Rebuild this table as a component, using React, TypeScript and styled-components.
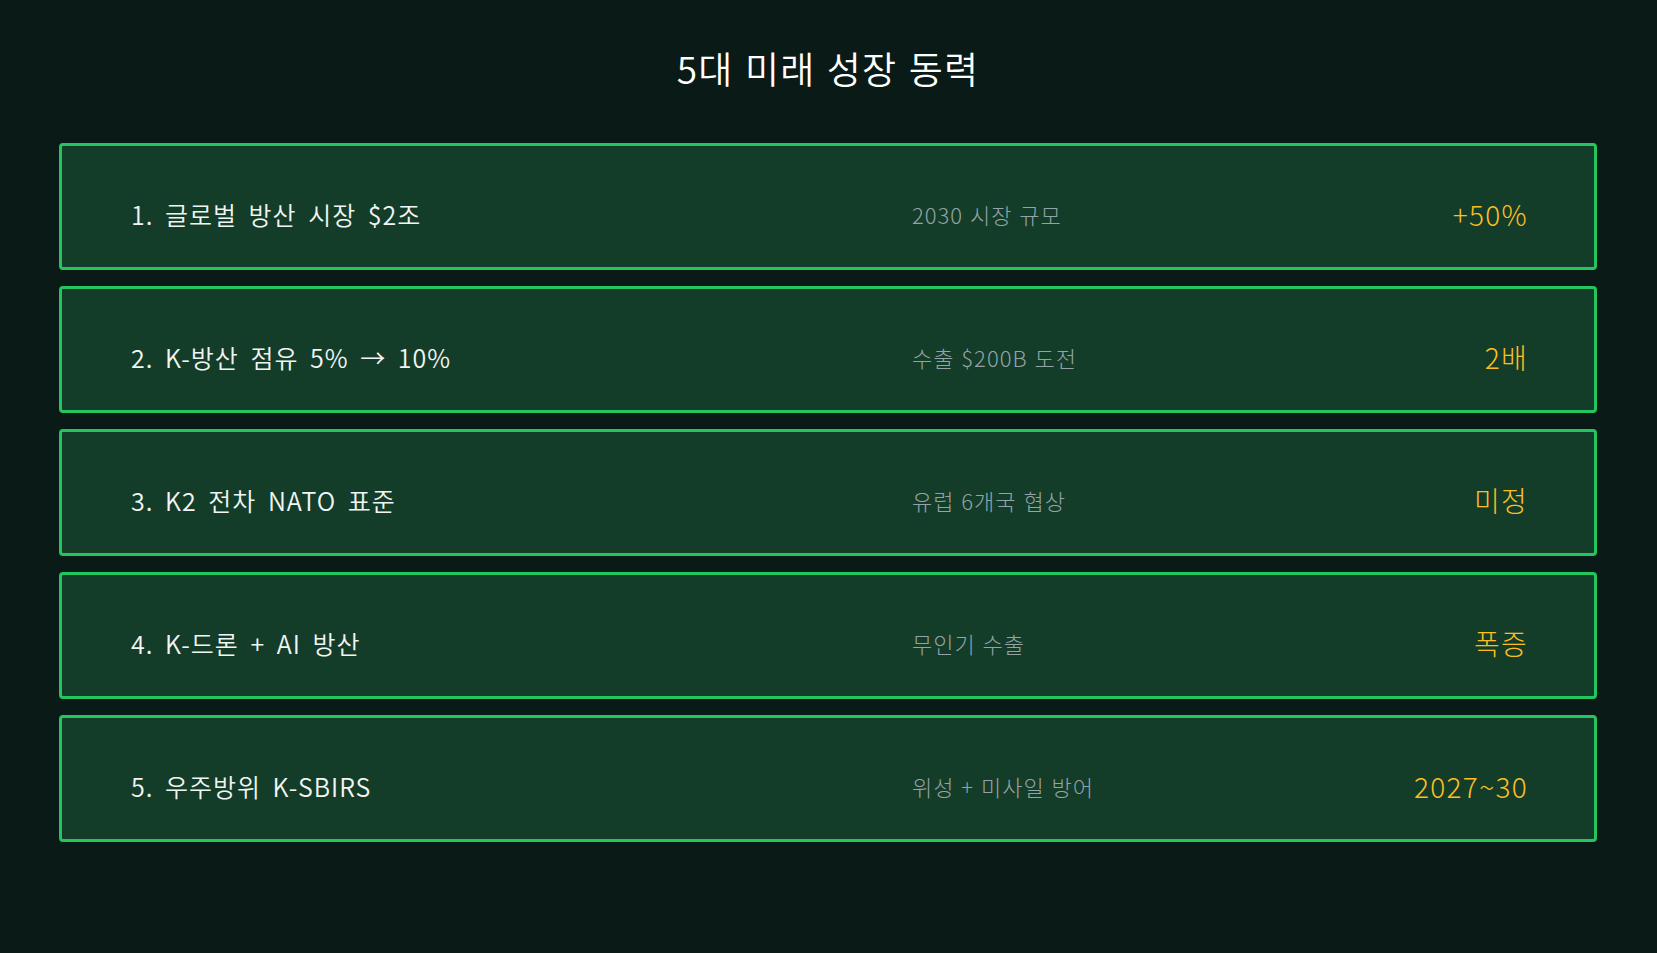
import React from 'react'
import styled, { createGlobalStyle } from 'styled-components'

const GlobalStyle = createGlobalStyle`
  html, body {
    margin: 0;
    padding: 0;
    background: #0a1a16;
  }
  body {
    font-family: 'Noto Sans CJK KR', 'Noto Sans', sans-serif;
  }
`

interface Driver {
  label: string
  note: string
  value: string
}

const drivers: Driver[] = [
  { label: '1. 글로벌 방산 시장 $2조', note: '2030 시장 규모', value: '+50%' },
  { label: '2. K-방산 점유 5% → 10%', note: '수출 $200B 도전', value: '2배' },
  { label: '3. K2 전차 NATO 표준', note: '유럽 6개국 협상', value: '미정' },
  { label: '4. K-드론 + AI 방산', note: '무인기 수출', value: '폭증' },
  { label: '5. 우주방위 K-SBIRS', note: '위성 + 미사일 방어', value: '2027~30' },
]

const Page = styled.div`
  width: 100%;
  min-height: 953px;
  box-sizing: border-box;
  padding: 38px 60px 40px 59px;
  background: #0a1a16;
`

const Title = styled.h1`
  margin: 0 0 45px;
  text-align: center;
  color: #ffffff;
  font-size: 37px;
  font-weight: 350;
  line-height: 60px;
  letter-spacing: 1.2px;
  word-spacing: 2px;
`

const List = styled.div`
  display: flex;
  flex-direction: column;
  gap: 16px;
`

const Row = styled.div`
  display: grid;
  grid-template-columns: 781px 1fr auto;
  align-items: center;
  box-sizing: border-box;
  height: 127px;
  padding: 15px 66px 0 69px;
  background: #143d29;
  border: 3px solid #22c55e;
  border-radius: 4px;
`

const Label = styled.div`
  color: #f1f5f3;
  font-size: 25px;
  font-weight: 350;
  letter-spacing: 1px;
  word-spacing: 5px;
`

const Note = styled.div`
  color: #94a3a8;
  font-size: 22px;
  font-weight: 300;
  letter-spacing: 1px;
  word-spacing: 1px;
`

const Value = styled.div`
  color: #fbbf24;
  font-size: 28px;
  font-weight: 300;
  letter-spacing: 1.3px;
  text-align: right;
`

const App = () => {
  return (
    <Page>
      <GlobalStyle />
      <Title>5대 미래 성장 동력</Title>
      <List>
        {drivers.map((d) => (
          <Row key={d.label}>
            <Label>{d.label}</Label>
            <Note>{d.note}</Note>
            <Value>{d.value}</Value>
          </Row>
        ))}
      </List>
    </Page>
  )
}

export default App
